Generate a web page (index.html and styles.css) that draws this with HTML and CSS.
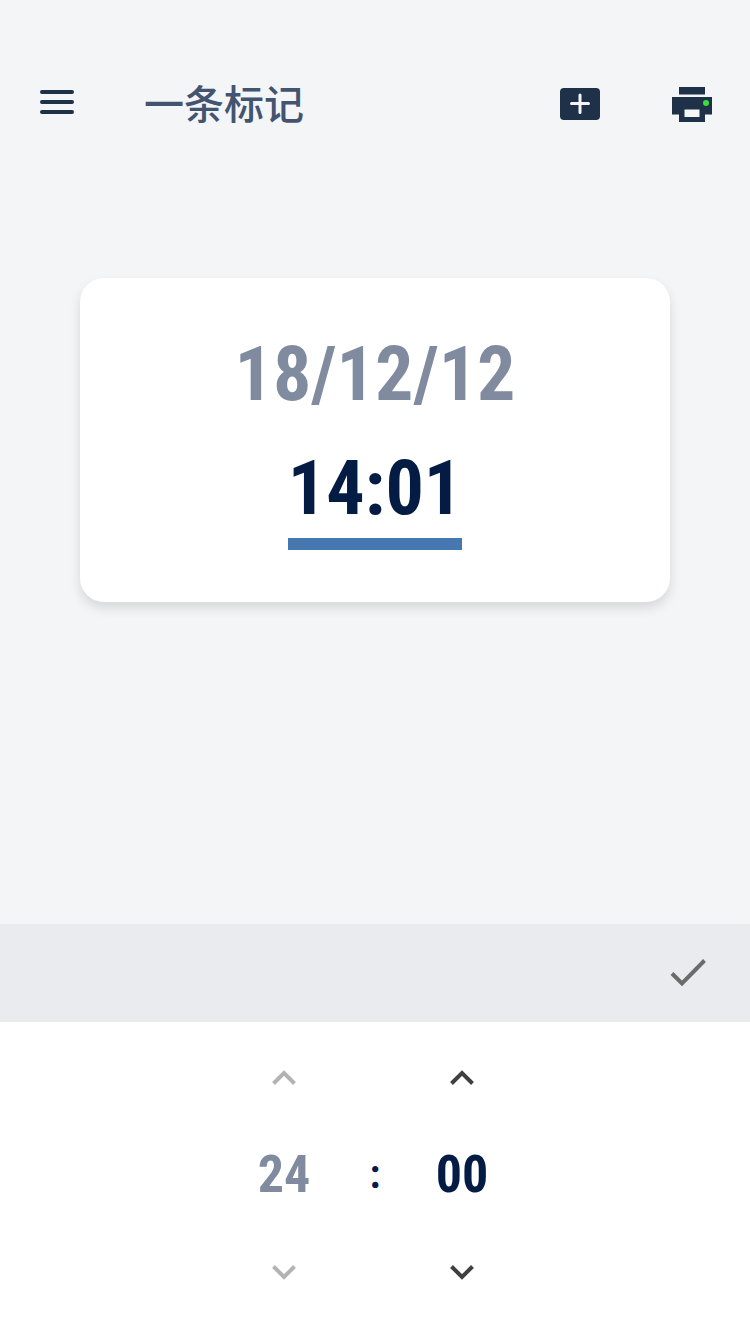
FILE: index.html
```html
<!DOCTYPE html>
<html lang="zh-CN">
<head>
<meta charset="utf-8">
<meta name="viewport" content="width=device-width, initial-scale=1">
<title>一条标记</title>
<link rel="stylesheet" href="styles.css">
</head>
<body>
<header class="topbar">
  <div class="heading">
    <button class="icon-button" type="button" aria-label="菜单">
      <svg width="34" height="24" viewBox="0 0 34 24"><path d="M2 2h30M2 12h30M2 22h30" fill="none" stroke="#1f3148" stroke-width="4" stroke-linecap="round"/></svg>
    </button>
    <h1 class="title">一条标记</h1>
  </div>
  <div class="actions">
    <button class="icon-button" type="button" aria-label="添加">
      <svg width="40" height="32" viewBox="0 0 40 32"><rect width="40" height="32" rx="4" fill="#1f3148"/><path d="M11.500 15.500h17M20 7v17.500" fill="none" stroke="#f4f5f7" stroke-width="3" stroke-linecap="round"/></svg>
    </button>
    <button class="icon-button" type="button" aria-label="打印">
      <svg width="40" height="35" viewBox="0 0 40 35"><path d="M7 0h26v7.500H7zM0 10h40v17.500h-7V35H7v-7.500H0z" fill="#1f3148"/><path d="M12.500 22.500h15v7.500h-15z" fill="#f4f5f7"/><circle cx="34" cy="16" r="3" fill="#38e038"/></svg>
    </button>
  </div>
</header>
<main class="stage">
  <section class="card">
    <button class="field date" type="button">18/12/12</button>
    <button class="field time" type="button">14:01</button>
  </section>
</main>
<section class="sheet">
  <div class="sheet-bar">
    <button class="icon-button" type="button" aria-label="确定">
      <svg width="36" height="28" viewBox="0 0 36 28"><path d="M2 14.500 12 24.500 34.500 1.500" fill="none" stroke="#6b6b6e" stroke-width="4"/></svg>
    </button>
  </div>
  <div class="picker">
    <div class="wheel muted">
      <button class="icon-button" type="button" aria-label="增加小时"><svg width="24" height="16" viewBox="0 0 24 16"><path d="M1.500 13.500 12 3 22.500 13.500" fill="none" stroke="currentColor" stroke-width="4"/></svg></button>
      <span class="digits">24</span>
      <button class="icon-button" type="button" aria-label="减少小时"><svg width="24" height="16" viewBox="0 0 24 16"><path d="M1.500 2.500 12 13 22.500 2.500" fill="none" stroke="currentColor" stroke-width="4"/></svg></button>
    </div>
    <span class="digits colon">:</span>
    <div class="wheel">
      <button class="icon-button" type="button" aria-label="增加分钟"><svg width="24" height="16" viewBox="0 0 24 16"><path d="M1.500 13.500 12 3 22.500 13.500" fill="none" stroke="currentColor" stroke-width="4"/></svg></button>
      <span class="digits">00</span>
      <button class="icon-button" type="button" aria-label="减少分钟"><svg width="24" height="16" viewBox="0 0 24 16"><path d="M1.500 2.500 12 13 22.500 2.500" fill="none" stroke="currentColor" stroke-width="4"/></svg></button>
    </div>
  </div>
</section>
</body>
</html>
```
FILE: styles.css
```css
* {
  box-sizing: border-box;
}

body {
  margin: 0;
  min-height: 100vh;
  display: flex;
  flex-direction: column;
  background: #f4f5f7;
  font-family: "Liberation Sans", "Noto Sans CJK SC", sans-serif;
}

button {
  margin: 0;
  padding: 0;
  border: 0;
  background: none;
  color: inherit;
  font: inherit;
  cursor: pointer;
}

.icon-button,
.icon-button svg {
  display: block;
}

.topbar {
  display: flex;
  align-items: center;
  justify-content: space-between;
  padding: 72px 38px 72px 40px;
}

.heading {
  display: flex;
  align-items: center;
  gap: 70px;
  padding-bottom: 4px;
}

.title {
  margin: 0;
  color: #42546f;
  font-family: "Noto Sans CJK SC", sans-serif;
  font-size: 40px;
  font-weight: 500;
  line-height: 60px;
}

.actions {
  display: flex;
  align-items: center;
  gap: 72px;
}

.stage {
  flex: 1;
  padding: 70px 80px;
}

.card {
  display: flex;
  flex-direction: column;
  align-items: center;
  padding: 46px 20px 52px;
  border-radius: 24px;
  background: #fff;
  box-shadow: 0 6px 12px rgba(0, 0, 0, 0.12);
}

.field,
.digits {
  font-family: "Roboto Condensed", "Liberation Sans Narrow", sans-serif;
  font-weight: 700;
}

.field {
  font-size: 76px;
  line-height: 100px;
}

.date {
  color: #808ba0;
}

.time {
  margin-top: 14px;
  border-bottom: 12px solid #4777b0;
  color: #041c44;
}

.sheet {
  background: #fff;
}

.sheet-bar {
  display: flex;
  align-items: center;
  justify-content: flex-end;
  height: 98px;
  padding-right: 44px;
  background: #eaebef;
}

.picker {
  display: flex;
  align-items: center;
  justify-content: center;
  padding: 48px 4px 54px 0;
  color: #041c44;
}

.wheel {
  display: flex;
  flex-direction: column;
  align-items: center;
  gap: 54px;
  width: 60px;
}

.wheel svg {
  color: #3f3f40;
}

.muted {
  color: #808ba0;
}

.muted svg {
  color: #b3b3b3;
}

.digits {
  font-size: 52px;
  line-height: 70px;
}

.colon {
  width: 118px;
  padding-left: 4px;
  font-size: 40px;
  text-align: center;
}
```
